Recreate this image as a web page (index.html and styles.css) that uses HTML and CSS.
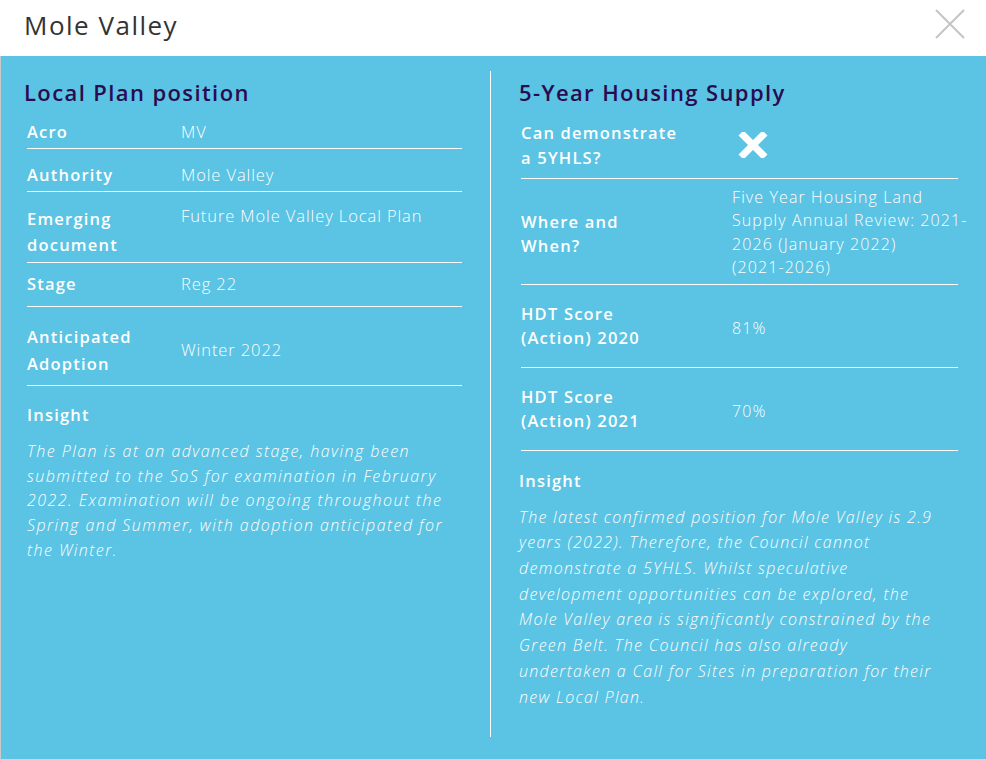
FILE: index.html
```html
<!DOCTYPE html>
<html lang="en">
<head>
<meta charset="utf-8">
<title>Mole Valley</title>
<link rel="stylesheet" href="styles.css">
</head>
<body>
<div class="modal">
  <header class="modal-header">
    <h1 class="modal-title">Mole Valley</h1>
    <button class="close-btn" aria-label="Close">
      <svg width="30" height="30" viewBox="0 0 30 30"><path d="M1 1 L29 29 M29 1 L1 29" stroke="#c4c4c4" stroke-width="2" fill="none"/></svg>
    </button>
  </header>
  <div class="modal-body">
    <section class="col col-left">
      <h2 class="section-title">Local Plan position</h2>
      <div class="table table-left">
        <div class="row r-acro"><div class="label">Acro</div><div class="value">MV</div></div>
        <div class="row r-auth"><div class="label">Authority</div><div class="value">Mole Valley</div></div>
        <div class="row r-emerg"><div class="label">Emerging<br>document</div><div class="value value-top">Future Mole Valley Local Plan</div></div>
        <div class="row r-stage"><div class="label">Stage</div><div class="value">Reg 22</div></div>
        <div class="row r-adopt"><div class="label">Anticipated<br>Adoption</div><div class="value">Winter 2022</div></div>
      </div>
      <h3 class="insight-title insight-left">Insight</h3>
      <p class="insight-text insight-text-left">The Plan is at an advanced stage, having been submitted to the SoS for examination in February 2022. Examination will be ongoing throughout the Spring and Summer, with adoption anticipated for the Winter.</p>
    </section>
    <section class="col col-right">
      <h2 class="section-title">5-Year Housing Supply</h2>
      <div class="table table-right">
        <div class="row r-can"><div class="label">Can demonstrate<br>a 5YHLS?</div><div class="value">
          <svg class="cross" width="30" height="26" viewBox="0 0 30 26"><path d="M3 1 L27 25 M27 1 L3 25" stroke="#ffffff" stroke-width="7" fill="none"/></svg>
        </div></div>
        <div class="row r-where"><div class="label">Where and<br>When?</div><div class="value value-small value-wide">Five Year Housing Land Supply Annual Review: 2021-2026 (January 2022) <span class="nowrap">(2021-2026)</span></div></div>
        <div class="row r-hdt"><div class="label">HDT Score<br>(Action) 2020</div><div class="value value-small">81%</div></div>
        <div class="row r-hdt"><div class="label">HDT Score<br>(Action) 2021</div><div class="value value-small">70%</div></div>
      </div>
      <h3 class="insight-title insight-right">Insight</h3>
      <p class="insight-text insight-text-right">The latest confirmed position for Mole Valley is 2.9 years (2022). Therefore, the Council cannot demonstrate a 5YHLS. Whilst speculative development opportunities can be explored, the Mole Valley area is significantly constrained by the Green Belt. The Council has also already undertaken a Call for Sites in preparation for their new Local Plan.</p>
    </section>
  </div>
</div>
</body>
</html>
```

FILE: styles.css
```css
* { box-sizing: border-box; }
html, body { margin: 0; padding: 0; }
body {
  font-family: "Open Sans", "DejaVu Sans", sans-serif;
  background: #ffffff;
  color: #ffffff;
}
.modal {
  width: 986px;
  height: 759px;
  display: flex;
  flex-direction: column;
}
.modal-header {
  height: 56px;
  flex: none;
  display: flex;
  align-items: center;
  justify-content: space-between;
  padding: 0 21px 0 24px;
  background: #ffffff;
}
.modal-title {
  margin: -6px 0 0 0;
  font-size: 26px;
  line-height: 32px;
  font-weight: 400;
  color: #333333;
  letter-spacing: 1.5px;
}
.close-btn {
  border: 0;
  background: none;
  padding: 0;
  width: 30px;
  height: 30px;
  margin-top: -8px;
  display: block;
}
.close-btn svg { display: block; }
.modal-body {
  flex: 1;
  background: #5bc3e3;
  border-left: 1px solid #c9c9c9;
  display: grid;
  grid-template-columns: 490px 1fr;
  padding: 15px 0 22px 0;
}
.col { min-width: 0; }
.col-left {
  border-right: 1px solid #ffffff;
  padding: 6px 28px 0 23px;
}
.col-right {
  padding: 6px 28px 0 28px;
}
.section-title {
  margin: 0;
  font-size: 22px;
  line-height: 30px;
  font-weight: 600;
  color: #2a0b50;
  letter-spacing: 1.4px;
}
.table-left { margin-left: 3px; }
.table-right { margin-left: 2px; }
.row {
  display: grid;
  border-bottom: 1px solid #ffffff;
  align-items: center;
}
.table-left .row { grid-template-columns: 154px 1fr; }
.table-right .row { grid-template-columns: 211px 1fr; }
.label {
  font-size: 16.5px;
  font-weight: 600;
  line-height: 26px;
  letter-spacing: 1.2px;
}
.value {
  font-size: 16.5px;
  font-weight: 300;
  line-height: 26px;
  letter-spacing: 0.9px;
}
.value-top { align-self: start; margin-top: -3px; }
.r-acro { padding: 12px 0 3px; }
.r-auth { padding: 13px 0 3px; }
.r-emerg { padding: 14px 0 4px; }
.r-stage { padding: 8px 0 9px; }
.r-adopt { padding: 16px 0 8px; }
.r-adopt .label { line-height: 27px; }

.table-right .label { line-height: 24.5px; }
.r-can { padding: 14px 0 8px; }
.r-can .value { padding-left: 6px; }
.cross { display: block; margin-top: -2px; }
.r-where { padding: 7px 0 4px; }
.r-where .label { margin-top: 3px; }
.value-small { font-size: 16px; line-height: 23.4px; letter-spacing: 1.1px; }
.value-wide { margin-right: -14px; }
.nowrap { white-space: nowrap; }
.r-hdt { padding: 17px 0 16px; }
.r-hdt .value { margin-top: 5px; }

.insight-title {
  margin: 0;
  font-size: 16.5px;
  font-weight: 600;
  line-height: 26px;
  letter-spacing: 1.2px;
}
.insight-left { margin: 16px 0 0 3px; }
.insight-right { margin: 17px 0 0 0; }
.insight-text {
  margin: 0;
  font-style: italic;
  font-weight: 300;
  font-size: 16px;
  letter-spacing: 1.3px;
}
.insight-text-left {
  margin: 11px 0 0 3px;
  line-height: 24.7px;
  width: 425px;
  letter-spacing: 1.45px;
}
.insight-text-right {
  margin: 11px 0 0 0;
  line-height: 25.7px;
  width: 425px;
}
```
